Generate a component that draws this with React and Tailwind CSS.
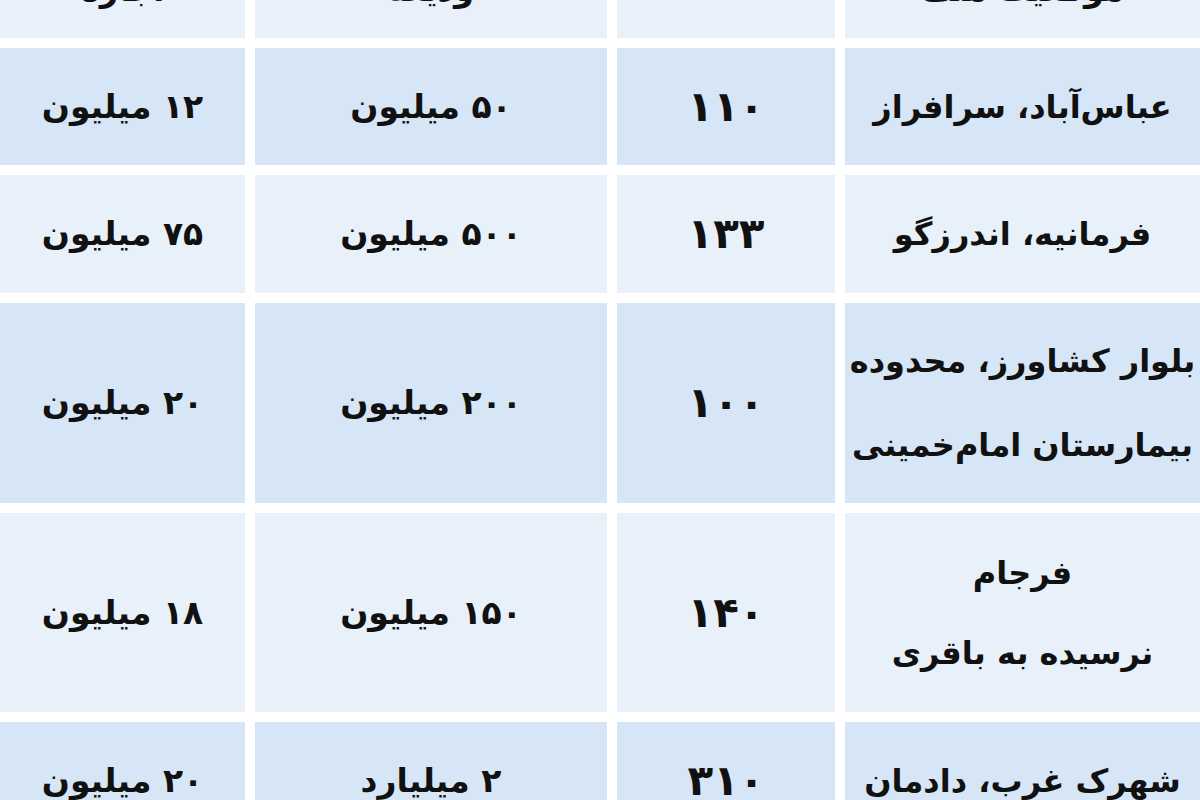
import React from "react";

const DARK = "bg-[#d6e6f7]";
const LIGHT = "bg-[#e8f0fa]";

const rows = [
  { h: "h-[117px]", bg: DARK, lh: "leading-[80px]", loc: ["عباس‌آباد، سرافراز"], area: "۱۱۰", dep: "۵۰ میلیون", rent: "۱۲ میلیون" },
  { h: "h-[118px]", bg: LIGHT, lh: "leading-[80px]", loc: ["فرمانیه، اندرزگو"], area: "۱۳۳", dep: "۵۰۰ میلیون", rent: "۷۵ میلیون" },
  { h: "h-[200px]", bg: DARK, lh: "leading-[84px]", loc: ["بلوار کشاورز، محدوده", "بیمارستان امام‌خمینی"], area: "۱۰۰", dep: "۲۰۰ میلیون", rent: "۲۰ میلیون" },
  { h: "h-[199px]", bg: LIGHT, lh: "leading-[80px]", loc: ["فرجام", "نرسیده به باقری"], area: "۱۴۰", dep: "۱۵۰ میلیون", rent: "۱۸ میلیون" },
  { h: "h-[117px]", bg: DARK, lh: "leading-[80px]", loc: ["شهرک غرب، دادمان"], area: "۳۱۰", dep: "۲ میلیارد", rent: "۲۰ میلیون" },
];

function Cell({ bg, children }) {
  return (
    <div className={`${bg} flex flex-col items-center justify-center text-center whitespace-nowrap`}>
      {children}
    </div>
  );
}

export default function App() {
  return (
    <div
      dir="rtl"
      className="w-[1200px] h-[800px] overflow-hidden bg-white text-[#111] font-bold"
      style={{ fontFamily: '"DejaVu Sans", "Noto Sans", sans-serif' }}
    >
      <div className="grid grid-cols-[355px_218px_352px_245px] gap-[10px]">
        {/* header (cut off by the top edge) */}
        {["موقعیت ملک", "", "ودیعه", "اجاره"].map((t, i) => (
          <div key={i} className={`${LIGHT} h-[38px] overflow-hidden flex flex-col justify-end items-center`}>
            <div className="text-[32px] leading-[40px] mb-[28px] whitespace-nowrap">{t}</div>
          </div>
        ))}
      </div>
      <div className="grid grid-cols-[355px_218px_352px_245px] gap-[10px] mt-[10px]">
        {rows.map((r, i) => (
          <React.Fragment key={i}>
            <div className={`${r.bg} ${r.h} flex flex-col items-center justify-center text-center whitespace-nowrap text-[32px] ${r.lh}`}>
              {r.loc.map((l, j) => (
                <div key={j}>{l}</div>
              ))}
            </div>
            <Cell bg={r.bg}>
              <div className="text-[42px] leading-[50px]">{r.area}</div>
            </Cell>
            <Cell bg={r.bg}>
              <div className="text-[33px]">{r.dep}</div>
            </Cell>
            <Cell bg={r.bg}>
              <div className="text-[33px]">{r.rent}</div>
            </Cell>
          </React.Fragment>
        ))}
      </div>
    </div>
  );
}
